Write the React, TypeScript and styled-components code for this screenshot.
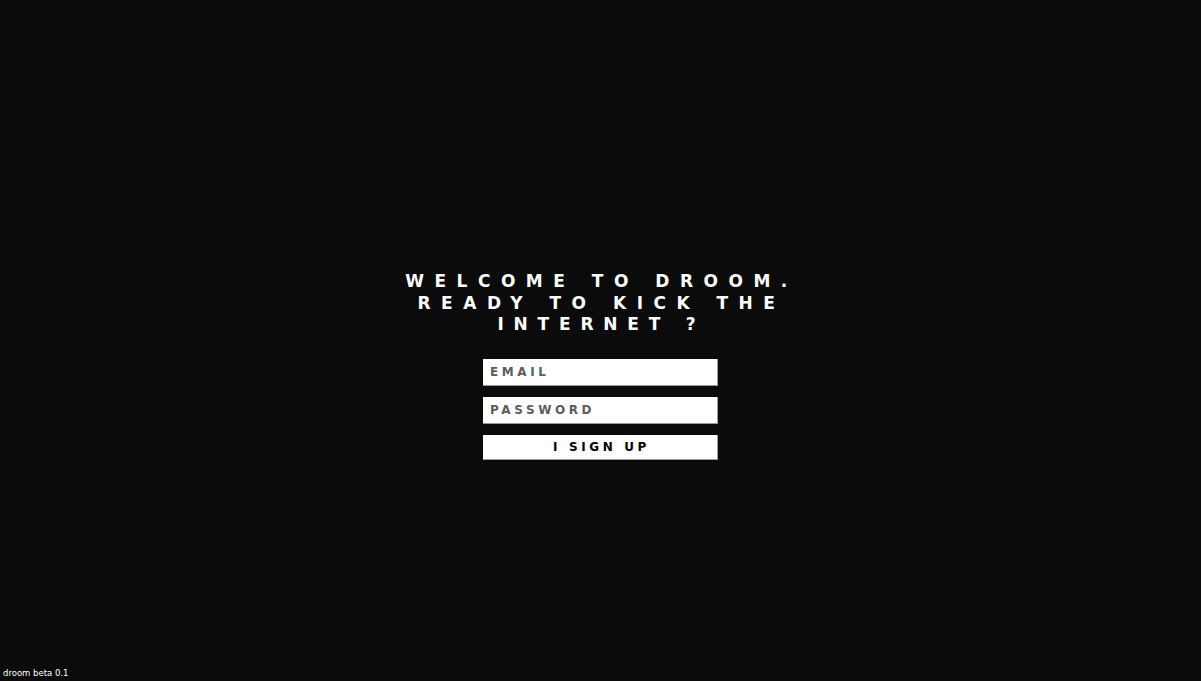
import React from "react";
import styled, { createGlobalStyle } from "styled-components";

const Global = createGlobalStyle`
  html, body { margin: 0; padding: 0; background: #0b0b0b; }
  #root { min-height: 100vh; }
`;

const Page = styled.main`
  position: relative;
  height: 681px;
  background: #0b0b0b;
  display: flex;
  flex-direction: column;
  align-items: center;
  padding-top: 271px;
  box-sizing: border-box;
  font-family: "DejaVu Sans", "Liberation Sans", sans-serif;
`;

const Title = styled.h1`
  margin: 0 0 23px 0;
  color: #ffffff;
  font-size: 17px;
  font-weight: 700;
  line-height: 21.5px;
  letter-spacing: 10.5px;
  text-align: center;
  text-transform: uppercase;
`;

const Line = styled.span<{ $tight?: boolean }>`
  display: block;
  margin-right: -2px;
  letter-spacing: ${(p) => (p.$tight ? "9.8px" : "10.5px")};
`;

const Form = styled.form`
  display: flex;
  flex-direction: column;
  gap: 11px;
  width: 235px;
`;

const Field = styled.input`
  height: 27px;
  box-sizing: border-box;
  border: none;
  box-shadow: inset -1px -1px 0 #9a9a9a;
  background: #ffffff;
  padding: 0 7px;
  font-family: "DejaVu Sans", sans-serif;
  font-size: 12px;
  font-weight: 700;
  letter-spacing: 3.6px;
  color: #222;
  outline: none;
  &::placeholder { color: #5c5c5c; }
`;

const Submit = styled.button`
  height: 25px;
  border: none;
  box-shadow: inset -1px -1px 0 #9a9a9a;
  background: #ffffff;
  color: #000;
  font-family: "DejaVu Sans", sans-serif;
  font-size: 12px;
  font-weight: 700;
  letter-spacing: 3.6px;
  padding: 0 0 0 2px;
  cursor: pointer;
`;

const Footer = styled.div`
  position: absolute;
  left: 3px;
  bottom: 3px;
  color: #ffffff;
  font-family: "DejaVu Sans", sans-serif;
  font-size: 8.5px;
`;

export default function App() {
  return (
    <>
      <Global />
      <Page>
        <Title>
          <Line>Welcome to droom.</Line>
          <Line>Ready to kick the</Line>
          <Line $tight>internet ?</Line>
        </Title>
        <Form onSubmit={(e) => e.preventDefault()}>
          <Field type="email" placeholder="EMAIL" />
          <Field type="password" placeholder="PASSWORD" />
          <Submit type="submit">I SIGN UP</Submit>
        </Form>
        <Footer>droom beta 0.1</Footer>
      </Page>
    </>
  );
}
